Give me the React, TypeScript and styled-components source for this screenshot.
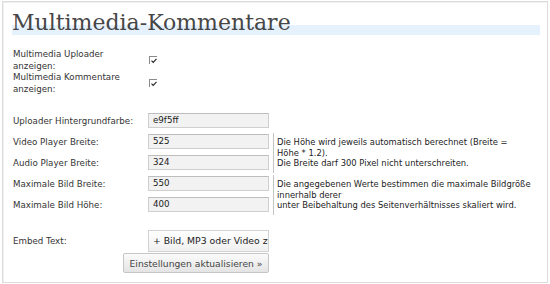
import styled, { createGlobalStyle } from 'styled-components'

const Global = createGlobalStyle`
    html, body {
        margin: 0;
        padding: 0;
        background: #fff;
    }
    body {
        font-family: "DejaVu Sans", Verdana, sans-serif;
        font-size: 8.7px;
        color: #333;
    }
`

const Frame = styled.div`
    box-sizing: border-box;
    width: 546px;
    height: 282px;
    margin: 1px 2px;
    border: 1px solid #dcdcdc;
    box-shadow: inset 1px 1px 0 #f0f0f0;
    padding: 0 9px;
`

const Title = styled.h2`
    margin: 9px 0 0;
    height: 24px;
    font-family: "DejaVu Serif", Georgia, serif;
    font-weight: normal;
    font-size: 22px;
    line-height: 24px;
    color: #464646;
    background: linear-gradient(to bottom, transparent 58%, #e5f1fc 58%);
    width: 528px;
`

const Form = styled.div`
    display: grid;
    grid-template-columns: 135px 125px 1fr;
    margin-top: 13px;
    padding-left: 1px;
`

const Label = styled.div<{ $h?: number }>`
    grid-column: 1;
    height: ${p => p.$h ?? 21}px;
    display: flex;
    align-items: center;
    line-height: 12px;
`

const Cell = styled.div`
    grid-column: 2;
    display: flex;
    align-items: center;
`

const Spacer = styled.div<{ $h: number }>`
    grid-column: 1 / -1;
    height: ${p => p.$h}px;
`

const Check = styled.span`
    position: relative;
    display: inline-block;
    box-sizing: border-box;
    width: 8px;
    height: 8px;
    margin-left: 1px;
    border-top: 1px solid #8a8a8a;
    border-left: 1px solid #8a8a8a;
    background: #fff;
`

const Tick = () => (
    <svg width="6" height="6" viewBox="0 0 6 6" style={{ position: 'absolute', left: 1, top: 1 }}>
        <path d="M0.5 2.6 L2.2 4.4 L5.5 0.8" fill="none" stroke="#222" strokeWidth="1.1" />
    </svg>
)

const Field = styled.div`
    box-sizing: border-box;
    width: 121px;
    height: 15px;
    padding: 0 4px;
    border: 1px solid #cfcfcf;
    border-top-color: #bdbdbd;
    background: #f2f2f2;
    color: #222;
    line-height: 13px;
`

const Note = styled.div`
    grid-column: 3;
    grid-row: span 2;
    display: flex;
    align-items: center;
    margin: 2px 0 0 0;
    padding-left: 3px;
    border-left: 1px solid #c4c4c4;
    font-size: 8.4px;
    line-height: 10.5px;
    white-space: nowrap;
    color: #222;
`

const EmbedButton = styled.div`
    box-sizing: border-box;
    width: 121px;
    height: 22px;
    padding: 0 4px;
    border: 1px solid #d2d2d2;
    background: linear-gradient(#ffffff, #f0f0f0);
    color: #222;
    white-space: nowrap;
    overflow: hidden;
    line-height: 20px;
    font-size: 9.3px;
`

const Actions = styled.div`
    display: flex;
    padding-left: 111px;
    margin-top: 1px;
`

const Submit = styled.button`
    box-sizing: border-box;
    width: 146px;
    height: 20px;
    padding: 0;
    border: 1px solid #c6c6c6;
    border-radius: 2px;
    background: linear-gradient(#fbfbfb, #e4e4e4);
    font-family: "DejaVu Sans", Verdana, sans-serif;
    font-size: 9.2px;
    color: #444;
`

const App = () => {
    return (
        <>
            <Global />
            <Frame>
                <Title>Multimedia-Kommentare</Title>
                <Form>
                    <Label $h={23}>Multimedia Uploader<br />anzeigen:</Label>
                    <Cell><Check><Tick /></Check></Cell>
                    <Label $h={23}>Multimedia Kommentare<br />anzeigen:</Label>
                    <Cell><Check><Tick /></Check></Cell>

                    <Spacer $h={16} />

                    <Label>Uploader Hintergrundfarbe:</Label>
                    <Cell><Field>e9f5ff</Field></Cell>

                    <Label>Video Player Breite:</Label>
                    <Cell><Field>525</Field></Cell>
                    <Note>
                        <div>
                            Die Höhe wird jeweils automatisch berechnet (Breite =<br />
                            Höhe * 1.2).<br />
                            Die Breite darf 300 Pixel nicht unterschreiten.
                        </div>
                    </Note>
                    <Label>Audio Player Breite:</Label>
                    <Cell><Field>324</Field></Cell>

                    <Label>Maximale Bild Breite:</Label>
                    <Cell><Field>550</Field></Cell>
                    <Note>
                        <div>
                            Die angegebenen Werte bestimmen die maximale Bildgröße<br />
                            innerhalb derer<br />
                            unter Beibehaltung des Seitenverhältnisses skaliert wird.
                        </div>
                    </Note>
                    <Label>Maximale Bild Höhe:</Label>
                    <Cell><Field>400</Field></Cell>

                    <Spacer $h={14} />

                    <Label $h={23}>Embed Text:</Label>
                    <Cell><EmbedButton>+ Bild, MP3 oder Video zum Kommentar</EmbedButton></Cell>
                </Form>
                <Actions>
                    <Submit>Einstellungen aktualisieren »</Submit>
                </Actions>
            </Frame>
        </>
    )
}

export default App
